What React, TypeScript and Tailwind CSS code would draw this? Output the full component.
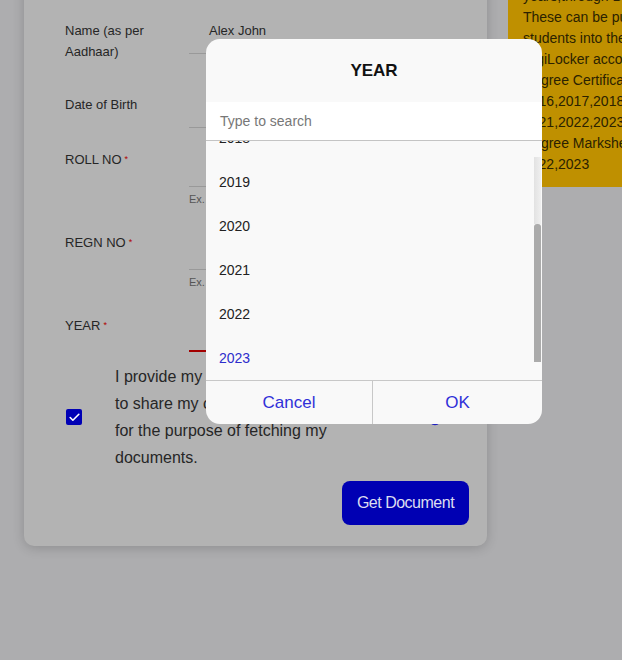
import { Check } from 'lucide-react';

const years = ['2018', '2019', '2020', '2021', '2022', '2023'];

function Req({ label }: { label: string }) {
  return (
    <span>
      {label}
      <sup className="ml-[3px] text-[9px] text-[#b00000] relative -top-[2px]">*</sup>
    </span>
  );
}

export default function App() {
  return (
    <div className="w-[622px] h-[660px] overflow-hidden bg-[#adadaf] font-['Liberation_Sans',Arial,sans-serif] relative">
      <div className="flex items-start -mt-[24px]">
        {/* form card */}
        <div className="ml-[24px] w-[463px] shrink-0 bg-[#b3b3b3] rounded-[10px] shadow-[0_2px_12px_rgba(0,0,0,0.18)] pt-[43.5px] pb-[21px] pl-[41px] pr-[18px] text-[13px] leading-[21px] text-[#262626]">
          <div className="grid grid-cols-[124px_1fr]">
            <div>Name (as per<br />Aadhaar)</div>
            <div className="h-[34px] border-b border-[#999] pl-[20px]">Alex John</div>
          </div>
          <div className="grid grid-cols-[124px_1fr] mt-[32px]">
            <div>Date of Birth</div>
            <div className="h-[34px] border-b border-[#999]" />
          </div>
          <div className="grid grid-cols-[124px_1fr] mt-[21px]">
            <div><Req label="ROLL NO" /></div>
            <div>
              <div className="h-[38px] border-b border-[#999]" />
              <div className="mt-[6px] text-[11px] leading-[13px] text-[#555]">Ex.</div>
            </div>
          </div>
          <div className="grid grid-cols-[124px_1fr] mt-[26px]">
            <div><Req label="REGN NO" /></div>
            <div>
              <div className="h-[38px] border-b border-[#999]" />
              <div className="mt-[6px] text-[11px] leading-[13px] text-[#555]">Ex.</div>
            </div>
          </div>
          <div className="grid grid-cols-[124px_1fr] mt-[26px]">
            <div><Req label="YEAR" /></div>
            <div className="h-[37px] border-b-2 border-[#a30000]" />
          </div>

          <div className="flex items-center mt-[11.5px]">
            <div className="ml-px w-[16px] h-[16px] rounded-[2px] bg-[#0000b5] flex items-center justify-center shrink-0">
              <Check size={13} strokeWidth={3} className="text-white" />
            </div>
            <div className="ml-[33px] text-[16px] leading-[27px] text-[#262626] whitespace-nowrap">
              I provide my consent to DigiLocker<br />
              to share my certificates with issuer<br />
              for the purpose of fetching my<br />
              documents.
            </div>
            <svg className="ml-auto mr-[27px] mt-[4px] shrink-0" width="14" height="14" viewBox="0 0 14 14">
              <circle cx="7" cy="7" r="5.5" fill="none" stroke="#2020c0" strokeWidth="1.5" />
            </svg>
          </div>

          <div className="flex justify-end mt-[9.5px]">
            <button className="w-[127px] h-[44px] rounded-[8px] bg-[#0000b3] text-[#dcdcf0] text-[16px] tracking-[-0.5px]">
              Get Document
            </button>
          </div>
        </div>

        {/* info box */}
        <div className="ml-[21px] w-[200px] shrink-0 bg-[#bf9000] pt-[9.5px] pb-[12.5px] pl-[15px] text-[14px] leading-[21px] text-[#2b2200] whitespace-nowrap">
          years,through DigiLocker.<br />
          These can be pulled by<br />
          students into their<br />
          DigiLocker account.<br />
          Degree Certificate<br />
          2016,2017,2018,2019<br />
          2021,2022,2023<br />
          Degree Marksheet<br />
          2022,2023
        </div>
      </div>

      {/* year picker dialog */}
      <div className="absolute left-[206px] top-[39px] w-[336px] h-[385px] bg-[#f9f9f9] rounded-[14px] overflow-hidden flex flex-col">
        <div className="h-[63px] flex items-center justify-center text-[17px] font-bold text-[#111]">YEAR</div>
        <div className="h-[39px] bg-white border-b border-[#c4c4c4] flex items-center pl-[14px] text-[14px] text-[#777]">
          Type to search
        </div>
        <div className="h-[239px] flex">
          <div className="flex-1 overflow-hidden">
            <div className="-mt-[25px]">
              {years.map(y => (
                <div
                  key={y}
                  className={`h-[44px] flex items-center pl-[13px] text-[14px] ${y === '2023' ? 'text-[#2d2dcc]' : 'text-[#222]'}`}
                >
                  {y}
                </div>
              ))}
            </div>
          </div>
          <div className="w-[7px] mr-px pt-[16px] pb-[18px] flex flex-col">
            <div className="h-[67px] bg-gradient-to-r from-[#e2e2e2] to-[#efefef]" />
            <div className="flex-1 bg-[#ababab] rounded-t-[3px]" />
          </div>
        </div>
        <div className="flex-1 border-t border-[#c8c8c8] flex text-[17px] text-[#3030d8]">
          <div className="w-[167px] flex items-center justify-center border-r border-[#c8c8c8]">Cancel</div>
          <div className="flex-1 flex items-center justify-center">OK</div>
        </div>
      </div>
    </div>
  );
}
